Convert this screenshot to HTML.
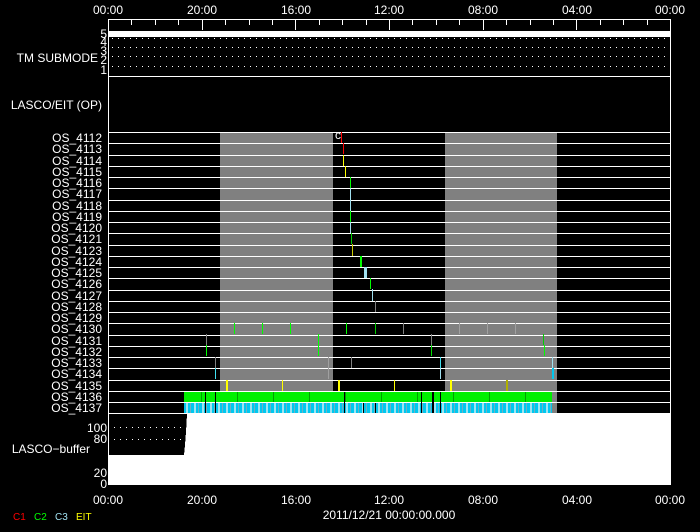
<!DOCTYPE html>
<html><head><style>
html,body{margin:0;padding:0;background:#000;}
body{width:700px;height:532px;overflow:hidden;position:relative;font-family:"Liberation Sans",sans-serif;color:#fff;}
svg{position:absolute;left:0;top:0}
text{font-family:"Liberation Sans",sans-serif;fill:#fff;font-size:12px}
</style></head><body>
<svg width="700" height="532" shape-rendering="crispEdges">
<defs>
<pattern id="gp" x="184" y="0" width="36" height="11" patternUnits="userSpaceOnUse">
<rect width="36" height="11" fill="#00f000"/>
<rect x="17" width="1" height="11" fill="#00a000"/>
</pattern>
<pattern id="cp" x="184" y="0" width="8" height="11" patternUnits="userSpaceOnUse">
<rect width="8" height="11" fill="#00c8f0"/>
<rect x="2" width="2" height="11" fill="#a0e4f0"/>
<rect x="6" width="1" height="11" fill="#70b0c0"/>
</pattern>
</defs>
<g text-anchor="middle">
<text x="108" y="14">00:00</text><text x="202" y="14">20:00</text><text x="296" y="14">16:00</text>
<text x="389" y="14">12:00</text><text x="483" y="14">08:00</text><text x="577" y="14">04:00</text><text x="670" y="14">00:00</text>
</g>
<rect x="108" y="19" width="563" height="1" fill="#fff"/>
<g fill="#fff">
<rect x="108" y="19" width="1" height="466"/>
<rect x="670" y="19" width="1" height="395"/>
</g>
<g id="ticks" fill="#fff"></g>
<rect x="109" y="31" width="562" height="6" fill="#fff"/>
<g stroke="#fff" stroke-dasharray="1 5" stroke-width="1">
<line x1="112" y1="38.5" x2="670" y2="38.5"/>
<line x1="112" y1="47.5" x2="670" y2="47.5"/>
<line x1="112" y1="56.5" x2="670" y2="56.5"/>
<line x1="112" y1="66.5" x2="670" y2="66.5"/>
</g>
<g text-anchor="end">
<text x="107" y="38" font-size="12">5</text><text x="107" y="46" font-size="10">4</text>
<text x="107" y="55" font-size="10">3</text><text x="107" y="64" font-size="10">2</text><text x="107" y="74" font-size="10">1</text>
</g>
<text x="98" y="62" text-anchor="end">TM SUBMODE</text>
<rect x="108" y="76" width="563" height="1" fill="#fff"/>
<text x="102" y="109" text-anchor="end">LASCO/EIT (OP)</text>
<rect x="220" y="132" width="113" height="282" fill="#808080"/>
<rect x="445" y="132" width="112" height="282" fill="#808080"/>
<g id="rows"></g>
<rect x="184" y="392" width="368" height="10" fill="url(#gp)"/>
<rect x="184" y="403" width="368" height="10" fill="url(#cp)"/>
<g fill="#000">
<rect x="205" y="392" width="1" height="21"/><rect x="215" y="392" width="1" height="21"/>
<rect x="421" y="392" width="1" height="21"/><rect x="432" y="392" width="2" height="21"/>
<rect x="440" y="392" width="1" height="21"/><rect x="344" y="392" width="1" height="21"/>
<rect x="363" y="403" width="1" height="10"/><rect x="375" y="403" width="1" height="10"/>
</g>
<text x="335" y="139" font-size="9">c</text>
<g>
<rect x="341" y="132" width="1" height="11" fill="#f00"/>
<rect x="343" y="143" width="1" height="11" fill="#f00"/>
<rect x="343" y="155" width="1" height="11" fill="#ff0"/>
<rect x="345" y="166" width="1" height="11" fill="#ff0"/>
<rect x="350" y="177" width="1" height="11" fill="#0f0"/>
<rect x="350" y="188" width="1" height="34" fill="#a0e0f0"/>
<rect x="350" y="211" width="1" height="11" fill="#0f0"/>
<rect x="350" y="222" width="1" height="11" fill="#a0e0f0"/>
<rect x="351" y="233" width="1" height="11" fill="#0c0"/>
<rect x="352" y="244" width="1" height="12" fill="#cc0"/>
<rect x="360" y="256" width="2" height="11" fill="#0f0"/>
<rect x="364" y="267" width="3" height="11" fill="#a0e0f0"/>
<rect x="370" y="278" width="1" height="11" fill="#0f0"/>
<rect x="372" y="289" width="1" height="12" fill="#a0e0f0"/>
<rect x="375" y="301" width="1" height="11" fill="#808080"/>
<rect x="375" y="323" width="1" height="11" fill="#0c0"/>
</g>
<g fill="#0f0">
<rect x="234" y="323" width="1" height="11"/><rect x="262" y="323" width="1" height="11"/><rect x="290" y="323" width="1" height="11"/>
<rect x="346" y="323" width="1" height="11"/><rect x="403" y="323" width="1" height="11" fill="#808080"/>
<rect x="459" y="323" width="1" height="11" fill="#a0a0a0"/><rect x="487" y="323" width="1" height="11" fill="#a0a0a0"/><rect x="515" y="323" width="1" height="11" fill="#a0a0a0"/>
<rect x="206" y="334" width="1" height="11" fill="#808080"/><rect x="206" y="345" width="1" height="11"/>
<rect x="318" y="334" width="1" height="22"/>
<rect x="431" y="334" width="1" height="22" fill="#808080"/>
<rect x="543" y="334" width="1" height="11" fill="#0c0"/><rect x="544" y="345" width="1" height="11"/>
<rect x="431" y="345" width="1" height="11" fill="#0d0"/>
</g>
<g fill="#40e0f0">
<rect x="215" y="357" width="1" height="11" fill="#808080"/><rect x="215" y="368" width="1" height="11"/>
<rect x="328" y="357" width="1" height="22" fill="#a0a0a0"/>
<rect x="440" y="357" width="1" height="11"/><rect x="440" y="368" width="1" height="11" fill="#a0e0f0"/>
<rect x="552" y="357" width="1" height="11" fill="#a0e0f0"/><rect x="552" y="368" width="2" height="11" fill="#00c8f0"/>
<rect x="351" y="357" width="1" height="11" fill="#808080"/>
</g>
<g fill="#ff0">
<rect x="226" y="380" width="2" height="11"/><rect x="282" y="380" width="1" height="11"/>
<rect x="338" y="380" width="2" height="11"/><rect x="394" y="380" width="1" height="11"/>
<rect x="450" y="380" width="2" height="11"/><rect x="506" y="380" width="2" height="11" fill="#b0b000"/>
</g>
<rect x="109" y="414" width="562" height="70" fill="#fff"/>
<polygon points="109,414 187,414 186,432 185,445 184,455 109,455" fill="#000"/>
<g stroke="#fff" stroke-dasharray="1 5">
<line x1="114" y1="427.5" x2="182" y2="427.5"/>
<line x1="114" y1="439.5" x2="182" y2="439.5"/>
</g>
<g text-anchor="end">
<text x="107" y="432">100</text><text x="107" y="443">80</text>
<text x="90" y="453">LASCO−buffer</text>
<text x="107" y="477">20</text><text x="107" y="488">0</text>
</g>
<rect x="108" y="484" width="563" height="1" fill="#fff"/>
<g text-anchor="middle">
<text x="108" y="504">00:00</text><text x="202" y="504">20:00</text><text x="296" y="504">16:00</text>
<text x="389" y="504">12:00</text><text x="483" y="504">08:00</text><text x="577" y="504">04:00</text><text x="670" y="504">00:00</text>
</g>
<text x="389" y="519" text-anchor="middle">2011/12/21 00:00:00.000</text>
<g font-size="9">
<text x="13" y="520" style="fill:#f00;font-size:10px">C1</text>
<text x="34" y="520" style="fill:#0f0;font-size:10px">C2</text>
<text x="55" y="520" style="fill:#a0e0f0;font-size:10px">C3</text>
<text x="76" y="520" style="fill:#ff0;font-size:10px">EIT</text>
</g>
</svg>
<script>
var ns="http://www.w3.org/2000/svg";
var t=document.getElementById("ticks");
for(var i=0;i<=24;i++){var x=Math.round(108+i*562/24);var r=document.createElementNS(ns,"rect");
r.setAttribute("x",x);r.setAttribute("y",20);r.setAttribute("width",1);r.setAttribute("height",i%4==0?10:5);t.appendChild(r);}
var labels=["OS_4112","OS_4113","OS_4114","OS_4115","OS_4116","OS_4117","OS_4118","OS_4119","OS_4120","OS_4121","OS_4123","OS_4124","OS_4125","OS_4126","OS_4127","OS_4128","OS_4129","OS_4130","OS_4131","OS_4132","OS_4133","OS_4134","OS_4135","OS_4136","OS_4137"];
var g=document.getElementById("rows");
for(var i=0;i<=25;i++){var y=Math.round(132+i*11.25);var r=document.createElementNS(ns,"rect");
r.setAttribute("x",108);r.setAttribute("y",y);r.setAttribute("width",563);r.setAttribute("height",1);r.setAttribute("fill","#fff");g.appendChild(r);
if(i<25){var tx=document.createElementNS(ns,"text");tx.setAttribute("x",102);tx.setAttribute("y",y+10);tx.setAttribute("text-anchor","end");tx.textContent=labels[i];g.appendChild(tx);}}
</script>
</body></html>
